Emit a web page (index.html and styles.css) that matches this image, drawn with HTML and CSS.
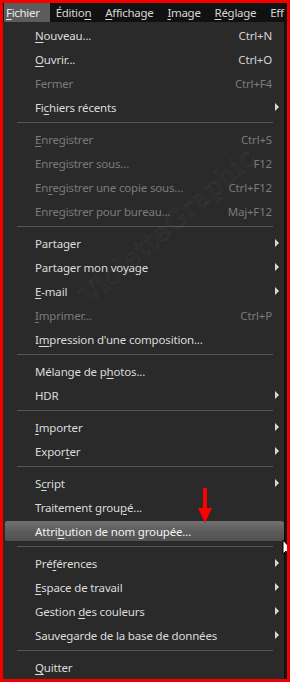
FILE: index.html
```html
<!DOCTYPE html>
<html>
<head>
    <meta charset="UTF-8">
    <title>Fichier</title>
    <link rel="stylesheet" href="styles.css">
</head>
<body>
<div class="frame">
    <!-- barre de menus -->
    <div class="menubar">
        <span class="top open"><u>F</u>ichier</span>
        <span class="top">Éditio<u>n</u></span>
        <span class="top"><u>A</u>ffichage</span>
        <span class="top"><u>I</u>mage</span>
        <span class="top"><u>R</u>églage</span>
        <span class="top">Eff</span>
    </div>

    <div class="menu">
        <div class="item"><span><u>N</u>ouveau...</span><span class="key">Ctrl+N</span></div>
        <div class="item"><span><u>O</u>uvrir...</span><span class="key">Ctrl+O</span></div>
        <div class="item off"><span>Fermer</span><span class="key">Ctrl+F4</span></div>
        <div class="item sub"><span>Fi<u>c</u>hiers récents</span></div>
        <div class="sep"></div>
        <div class="item off"><span><u>E</u>nregistrer</span><span class="key">Ctrl+S</span></div>
        <div class="item off"><span>Enregistrer sous...</span><span class="key">F12</span></div>
        <div class="item off"><span>En<u>r</u>egistrer une copie sous...</span><span class="key">Ctrl+F12</span></div>
        <div class="item off"><span>Enregistrer pour bureau...</span><span class="key">Maj+F12</span></div>
        <div class="sep"></div>
        <div class="item sub"><span>Partager</span></div>
        <div class="item sub"><span>Partager mon voyage</span></div>
        <div class="item sub"><span><u>E</u>-mail</span></div>
        <div class="item off"><span><u>I</u>mprimer...</span><span class="key">Ctrl+P</span></div>
        <div class="item"><span>I<u>m</u>pression d'une composition...</span></div>
        <div class="sep"></div>
        <div class="item"><span>Mélange de p<u>h</u>otos...</span></div>
        <div class="item sub"><span>HDR</span></div>
        <div class="sep"></div>
        <div class="item sub"><span><u>I</u>mporter</span></div>
        <div class="item sub"><span>Expor<u>t</u>er</span></div>
        <div class="sep"></div>
        <div class="item sub"><span>S<u>c</u>ript</span></div>
        <div class="item"><span>Traitement grou<u>p</u>é...</span></div>
        <div class="item hot"><span>Attri<u>b</u>ution de nom groupée...</span></div>
        <div class="sep"></div>
        <div class="item sub"><span>Pré<u>f</u>érences</span></div>
        <div class="item sub"><span><u>E</u>space de travail</span></div>
        <div class="item sub"><span>Gestion <u>d</u>es couleurs</span></div>
        <div class="item sub"><span>Sauvegarde de la base de données</span></div>
        <div class="sep"></div>
        <div class="item"><span><u>Q</u>uitter</span></div>

        <!-- filigrane et annotations posés par-dessus -->
        <span class="mark">VioletteGraphic</span>
        <svg class="pointer" width="14" height="36" viewBox="0 0 14 36">
            <rect x="5" y="0" width="4" height="22" fill="#f00"/>
            <polygon points="0,20 14,20 7,35" fill="#f00"/>
        </svg>
        <svg class="cursor" width="10" height="18" viewBox="0 0 10 18">
            <polygon points="1,1 1,15 4,12 6,17 8,16 6,11 10,11" fill="#fff" stroke="#000" stroke-width="1"/>
        </svg>
    </div>
</div>
</body>
</html>
```

FILE: styles.css
```css
body {
    margin: 0;
    background-color: #ff0000;
}
.frame {
    width: 290px;
    height: 682px;
    box-sizing: border-box;
    border: 3px solid #f20000;
    background-color: #151515;
    overflow: hidden;
    font-family: "Noto Sans", "Open Sans", sans-serif;
    font-size: 11.5px;
    letter-spacing: -0.17px;
}
u {
    text-decoration-thickness: 1px;
    text-underline-offset: 2px;
}

/* barre de menus */
.menubar {
    display: flex;
    height: 19px;
    background-color: #111111;
    white-space: nowrap;
}
.top {
    color: #d6d6d6;
    line-height: 19px;
    padding: 0 7px 0 7px;
    letter-spacing: -0.3px;
    flex-shrink: 0;
}
.top.open {
    background-color: #5c5c5c;
    color: #ececec;
    padding: 0 10px 0 2px;
    margin: 0 -1px 0 1px;
}

/* menu déroulant */
.menu {
    position: relative;
    height: 658px;
    background-color: #2a2a2a;
    border-right: 1px solid #101010;
    margin-right: 2px;
    padding-top: 1px;
    box-sizing: border-box;
}
.item {
    display: flex;
    justify-content: space-between;
    align-items: center;
    height: 24px;
    padding: 0 12px 0 32px;
    color: #dcdcdc;
    white-space: nowrap;
}
.item.off {
    color: #7b7b7b;
}
.key {
    color: #d4d4d4;
}
.off .key {
    color: #7b7b7b;
}
.item.sub::after {
    content: "";
    border-left: 4px solid #d8d8d8;
    border-top: 4px solid transparent;
    border-bottom: 4px solid transparent;
    margin-right: -7px;
}
.item.hot {
    box-sizing: border-box;
    border: 2px solid transparent;
    border-right: 0;
    background-clip: padding-box;
    padding-left: 30px;
    border-radius: 4px;
    background-image: linear-gradient(#727272, #5a5a5a 55%, #525252);
    color: #f2f2f2;
}
.sep {
    height: 1px;
    margin: 3px 11px 4px 14px;
    background-color: #555555;
}

/* par-dessus le contenu */
.mark {
    position: absolute;
    left: 54px;
    top: 189px;
    transform: rotate(-41deg);
    font-family: "DejaVu Serif", serif;
    font-size: 26px;
    letter-spacing: 1px;
    color: transparent;
    -webkit-text-stroke: 1px rgba(255, 255, 255, 0.06);
    pointer-events: none;
}
.pointer {
    position: absolute;
    left: 195px;
    top: 466px;
}
.cursor {
    position: absolute;
    left: 279px;
    top: 517px;
}
```
